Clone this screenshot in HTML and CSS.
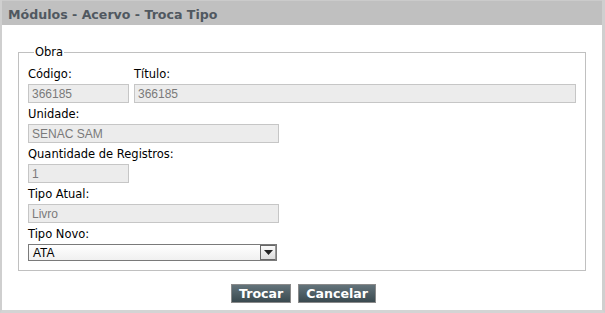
FILE: index.html
```html
<!DOCTYPE html>
<html lang="pt">
<head>
  <meta charset="UTF-8">
  <title>Troca Tipo</title>
  <link rel="stylesheet" href="styles.css">
</head>
<body>
  <div class="janela">
    <div class="titulo">Módulos - Acervo - Troca Tipo</div>

    <div class="conteudo">
      <fieldset class="obra">
        <legend>Obra</legend>

        <div class="linha">
          <div class="campo">
            <label for="codigo">Código:</label>
            <input type="text" id="codigo" class="curto" value="366185" disabled>
          </div>
          <div class="campo">
            <label for="titulo">Título:</label>
            <input type="text" id="titulo" class="longo" value="366185" disabled>
          </div>
        </div>

        <label for="unidade">Unidade:</label>
        <input type="text" id="unidade" class="medio" value="SENAC SAM" disabled>

        <label for="quantidade">Quantidade de Registros:</label>
        <input type="text" id="quantidade" class="curto" value="1" disabled>

        <label for="tipoAtual">Tipo Atual:</label>
        <input type="text" id="tipoAtual" class="medio" value="Livro" disabled>

        <label for="tipoNovo">Tipo Novo:</label>
        <div class="select">
          <span>ATA</span>
          <span class="seta">
            <svg width="9" height="5" viewBox="0 0 9 5"><path d="M0 0h9L4.5 5z" fill="#222"/></svg>
          </span>
        </div>
      </fieldset>

      <div class="acoes">
        <button class="botao">Trocar</button>
        <button class="botao">Cancelar</button>
      </div>
    </div>
  </div>
</body>
</html>
```

FILE: styles.css
```css
body {
  margin: 0;
  padding: 0;
  background-color: #fff;
  font-family: 'DejaVu Sans', Verdana, sans-serif;
}

.janela {
  width: 605px;
  height: 313px;
  box-sizing: border-box;
  border-left: 2px solid #cfcfcf;
  border-right: 3px solid #cfcfcf;
  border-bottom: 3px solid #d4d4d4;
  background-color: #fff;
}

.titulo {
  height: 25px;
  line-height: 27px;
  padding-left: 6px;
  background-color: #c0c0c0;
  border-top: 1px solid #cbcbcb;
  box-sizing: border-box;
  color: #505860;
  font-size: 12.6px;
  font-weight: bold;
}

.conteudo {
  padding: 20px 17px 0 16px;
}

.obra {
  margin: 0;
  padding: 4px 9px 5px 9px;
  border: 1px solid #c0c0c0;
  height: 226px;
  box-sizing: border-box;
}

.obra legend {
  padding: 0 1px;
  margin-left: 6px;
  font-size: 11.5px;
  color: #000;
}

.linha {
  display: flex;
  gap: 5px;
}

label {
  display: block;
  font-size: 11.5px;
  color: #000;
  height: 17px;
  line-height: 17px;
  margin-top: 3px;
  margin-bottom: 1px;
}

input {
  display: block;
  box-sizing: border-box;
  height: 19px;
  margin: 0;
  padding: 0 3px;
  border: 1px solid #c6c6c6;
  background-color: #ececec;
  color: #7a7a7a;
  font-family: 'Liberation Sans', Arial, sans-serif;
  font-size: 12px;
}

.curto {
  width: 101px;
}

.medio {
  width: 251px;
}

.longo {
  width: 442px;
}

.select {
  display: flex;
  align-items: center;
  justify-content: space-between;
  box-sizing: border-box;
  width: 249px;
  height: 17px;
  border: 1px solid #7a7a7a;
  background: linear-gradient(#fff, #f0f0f0);
  font-family: 'Liberation Sans', Arial, sans-serif;
  font-size: 12px;
  color: #000;
  padding-left: 4px;
}

.seta {
  display: flex;
  align-items: center;
  justify-content: center;
  width: 16px;
  height: 15px;
  border: 1px solid #666;
  border-right-color: #999;
  box-sizing: border-box;
  background: linear-gradient(#fafafa, #dcdcdc);
}

.acoes {
  display: flex;
  justify-content: center;
  gap: 7px;
  margin-top: 13px;
  padding-left: 4px;
}

.botao {
  height: 19px;
  padding: 0 7px;
  border: 1px solid #8a8a8a;
  background: linear-gradient(#63737a, #3a4a50);
  color: #fff;
  font-family: 'DejaVu Sans', Verdana, sans-serif;
  font-size: 12.6px;
  font-weight: bold;
  cursor: pointer;
}
```
